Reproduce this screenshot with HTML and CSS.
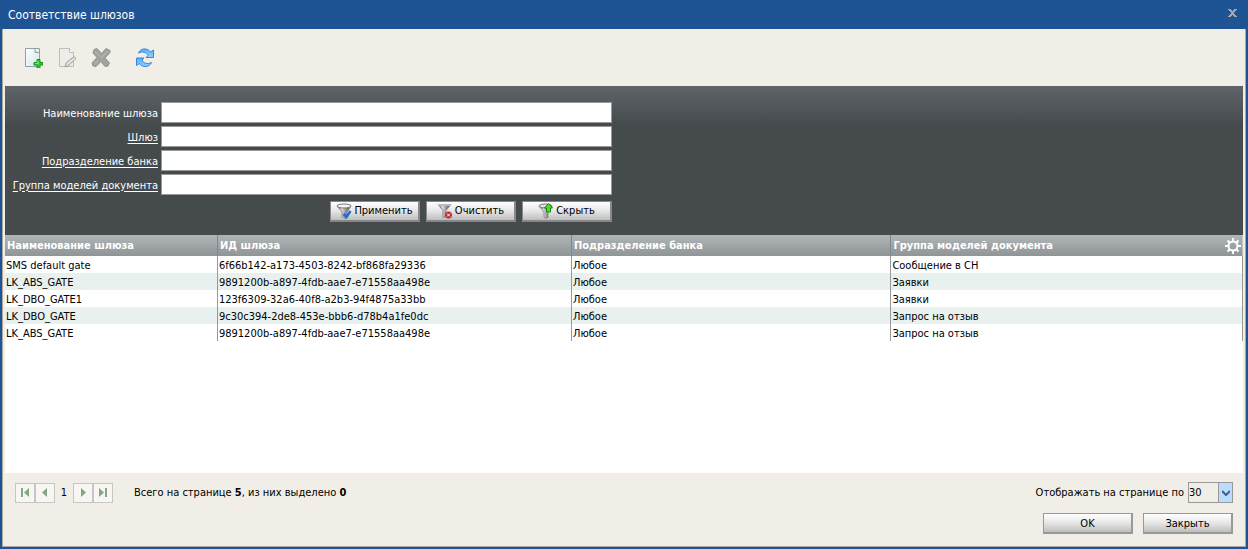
FILE: index.html
```html
<!DOCTYPE html>
<html lang="ru">
<head>
<meta charset="utf-8">
<title>Соответствие шлюзов</title>
<link rel="stylesheet" href="styles.css">
</head>
<body>
<svg class="defs" aria-hidden="true">
  <defs>
    <linearGradient id="paper" x1="0" y1="0" x2="1" y2="1"><stop offset="0" stop-color="#fff"/><stop offset="1" stop-color="#d3e6e6"/></linearGradient>
    <linearGradient id="sky" x1="0" y1="0" x2="0" y2="1"><stop offset="0" stop-color="#5aaef5"/><stop offset="1" stop-color="#90d2ff"/></linearGradient>
    <linearGradient id="steel" x1="0" y1="0" x2="1" y2="0"><stop offset="0" stop-color="#555"/><stop offset=".35" stop-color="#ddd"/><stop offset=".6" stop-color="#999"/><stop offset="1" stop-color="#444"/></linearGradient>
  </defs>
</svg>
<main class="window">
  <header class="titlebar">
    <h1 class="title">Соответствие шлюзов</h1>
    <button class="close" type="button" aria-label="Закрыть окно">
      <svg width="9" height="8" viewBox="0 0 9 8"><path d="M0 0h3v1h1v1h1V1h1V0h3v1H8v1H7v1H6v2h1v1h1v1h1v1H6V7H5V6H4v1H3v1H0V7h1V6h1V5h1V3H2V2H1V1H0z" fill="#a3a6ad"/></svg>
    </button>
  </header>
  <div class="body">
    <div class="toolbar">
      <button class="tool" type="button" aria-label="Создать">
        <svg width="20" height="20" viewBox="0 0 20 20"><path d="M2.500 .5h14v18h-14z" fill="url(#paper)" stroke="#8ba5a6"/><path d="M12 1v3.500h4" fill="#dce8e8" stroke="#8ba5a6"/><path d="M14 11.500h3v3h3v2.500h-3v3h-3v-3h-3v-2.500h3z" fill="#35c435" stroke="#14961e"/><path d="M15 13v2.500h-2.500" stroke="#8bf28b" fill="none"/></svg>
      </button>
      <button class="tool" type="button" aria-label="Изменить">
        <svg width="20" height="20" viewBox="0 0 20 20"><path d="M2.500 .5h10l4 4v14h-14z" fill="#eeede9" stroke="#bdbdb9"/><path d="M12.500 .5v4h4" fill="#fafafa" stroke="#bdbdb9"/><path d="M8 19l1-4 8-6.500 2 2L11 18z" fill="#d4d4d2" stroke="#a4a4a1"/><path d="M10 16.500l7.500-6" stroke="#f4f4f2"/></svg>
      </button>
      <button class="tool" type="button" aria-label="Удалить">
        <svg width="20" height="20" viewBox="0 0 20 20"><path d="M3 1.500l3-1 4.500 5L15 .5l4 2v2L14 10l4.500 5-1.500 3-3 .5-4-5-5 5-3-.5-1-3L6 9.500 2 5z" fill="#a2a29f" stroke="#91918e" stroke-linejoin="round"/><path d="M4 3.500l6.500 6L17 3M3.500 16l4-3.500" stroke="#bdbdba" fill="none"/></svg>
      </button>
      <button class="tool tool-refresh" type="button" aria-label="Обновить">
        <svg width="20" height="20" viewBox="0 0 20 20"><path d="M3.500 5C5.500 0 12.500-.5 15.500 4l3-2v7.500H11l2-2C11.500 4 7.500 3 3.500 5z" fill="url(#sky)" stroke="#3585e2" stroke-linejoin="round"/><path d="M16.500 14.500C14.500 19.500 7.500 20 4.500 15.500l-3 2V10H9l-2 2C8.500 15.500 12.500 16.500 16.500 14.500z" fill="url(#sky)" stroke="#3585e2" stroke-linejoin="round"/></svg>
      </button>
    </div>
    <form class="filter">
      <label class="caption" for="f-name">Наименование шлюза</label><input class="field" id="f-name" type="text">
      <label class="caption" for="f-gate"><a class="lookup" href="#gate">Шлюз</a></label><input class="field" id="f-gate" type="text">
      <label class="caption" for="f-dep"><a class="lookup" href="#department">Подразделение банка</a></label><input class="field" id="f-dep" type="text">
      <label class="caption" for="f-group"><a class="lookup" href="#group">Группа моделей документа</a></label><input class="field" id="f-group" type="text">
      <div class="actions">
        <button class="btn" type="button"><svg width="16" height="16" viewBox="0 0 16 16"><path d="M1 3l5 6v5l3 1.500 2-1V9l4-6z" fill="url(#steel)" stroke="#777" stroke-width=".7"/><ellipse cx="8" cy="3" rx="7" ry="2" fill="#f4f4f4" stroke="#777"/><path d="M7.500 11l3 3 4-6" fill="none" stroke="#1c6fd0" stroke-width="2.500"/></svg>Применить</button>
        <button class="btn" type="button"><svg width="16" height="16" viewBox="0 0 16 16"><path d="M1 1.500h13l-5 6v6l-3 1v-7z" fill="url(#steel)" stroke="#8a8a8a"/><path d="M1 2h13" stroke="#b9b9c4" stroke-width="2"/><circle cx="11.500" cy="12" r="3.500" fill="#bf2c32"/><path d="M10 10.500l3 3m0-3l-3 3" stroke="#fff"/></svg>Очистить</button>
        <button class="btn" type="button"><svg width="16" height="16" viewBox="0 0 16 16"><path d="M1 3l5 6v5l2 1.500 2-1V9l4-6z" fill="url(#steel)" stroke="#777" stroke-width=".7"/><ellipse cx="7.500" cy="3" rx="6.500" ry="2" fill="#e2e2e2" stroke="#777"/><path d="M10.500 .5l4 4.500h-2v4h-4V5h-2z" fill="#4cdb2b" stroke="#15890f"/></svg>Скрыть</button>
      </div>
    </form>
    <section class="grid">
      <table class="table">
        <colgroup><col class="c-name"><col class="c-id"><col class="c-dep"><col class="c-group"></colgroup>
        <thead><tr><th>Наименование шлюза</th><th>ИД шлюза</th><th>Подразделение банка</th><th><div class="last-head"><span>Группа моделей документа</span>
          <button class="gear" type="button" aria-label="Настройка"><svg width="16" height="16" viewBox="0 0 16 16"><circle cx="8" cy="8" r="4.500" fill="none" stroke="#fff" stroke-width="2"/><path d="M8 0v3M8 13v3M0 8h3M13 8h3M2.500 2.500l2 2M11.500 11.500l2 2M13.500 2.500l-2 2M4.500 11.500l-2 2" stroke="#fff" stroke-width="2"/></svg></button></div></th></tr></thead>
        <tbody>
          <tr><td>SMS default gate</td><td>6f66b142-a173-4503-8242-bf868fa29336</td><td>Любое</td><td>Сообщение в СН</td></tr>
          <tr><td>LK_ABS_GATE</td><td>9891200b-a897-4fdb-aae7-e71558aa498e</td><td>Любое</td><td>Заявки</td></tr>
          <tr><td>LK_DBO_GATE1</td><td>123f6309-32a6-40f8-a2b3-94f4875a33bb</td><td>Любое</td><td>Заявки</td></tr>
          <tr><td>LK_DBO_GATE</td><td>9c30c394-2de8-453e-bbb6-d78b4a1fe0dc</td><td>Любое</td><td>Запрос на отзыв</td></tr>
          <tr><td>LK_ABS_GATE</td><td>9891200b-a897-4fdb-aae7-e71558aa498e</td><td>Любое</td><td>Запрос на отзыв</td></tr>
        </tbody>
      </table>
    </section>
    <footer class="footer">
      <div class="status">
        <nav class="pager" aria-label="Страницы">
          <button class="page" type="button" aria-label="Первая"><svg width="10" height="10" viewBox="0 0 10 10"><path d="M1 0h2v9H1zM9 0v9L4 4.500z"/></svg></button>
          <button class="page" type="button" aria-label="Предыдущая"><svg width="10" height="10" viewBox="0 0 10 10"><path d="M7 0v9L2 4.500z"/></svg></button>
          <span class="current">1</span>
          <button class="page" type="button" aria-label="Следующая"><svg width="10" height="10" viewBox="0 0 10 10"><path d="M3 0v9l5-4.500z"/></svg></button>
          <button class="page" type="button" aria-label="Последняя"><svg width="10" height="10" viewBox="0 0 10 10"><path d="M1 0v9l5-4.500zM7 0h2v9H7z"/></svg></button>
        </nav>
        <p class="total">Всего на странице <b>5</b>, из них выделено <b>0</b></p>
        <label class="size-label" for="size">Отображать на странице по</label>
        <span class="size-box"><select class="size" id="size"><option>30</option></select><span class="arrow"><svg width="8" height="6" viewBox="0 0 8 6"><path d="M0 1l4 4 4-4" fill="none" stroke="#42618a" stroke-width="2"/></svg></span></span>
      </div>
      <div class="buttons">
        <button class="btn" type="button">OK</button>
        <button class="btn" type="button">Закрыть</button>
      </div>
    </footer>
  </div>
</main>
</body>
</html>
```
FILE: styles.css
```css
* { box-sizing: border-box; }
body { margin: 0; }
body, button, input, select {
  font: 11px/13px "Tahoma", "DejaVu Sans Condensed", "DejaVu Sans", sans-serif;
  color: #000;
}
button { padding: 0; }
svg { display: block; flex: none; }
.defs { position: absolute; width: 0; height: 0; }

.window {
  display: flex;
  flex-direction: column;
  min-height: 100vh;
  padding: 0 2px 2px;
  background: #1e5494;
}
.titlebar {
  display: flex;
  align-items: center;
  justify-content: space-between;
  height: 29px;
  padding: 0 8px 0 6px;
}
.title { margin: 0; font-size: 12px; line-height: 16px; font-weight: normal; color: #fff; }
.close { display: flex; padding: 1px; margin-bottom: 3px; border: 0; background: none; }

.body {
  display: flex;
  flex: 1;
  flex-direction: column;
  padding: 0 2px;
  border: 1px solid #aaa8a2;
  border-top: 0;
  background: #f1eee7;
}
.toolbar { display: flex; align-items: center; gap: 14px; height: 57px; padding: 1px 0 0 18px; }
.tool { border: 0; background: none; }
.tool-refresh { margin-left: 10px; }

.filter {
  display: grid;
  grid-template-columns: 153px minmax(0, 451px);
  align-items: center;
  gap: 3px;
  padding: 16px 0 13px;
  background: linear-gradient(#5e6468, #454a4d 40px);
}
.caption { padding-top: 1px; color: #fff; text-align: right; white-space: nowrap; }
.lookup { color: #fff; text-underline-offset: 2px; }
.field { width: 100%; height: 21px; padding: 1px 3px; border: 1px solid #999; background: #fff; }
.actions { display: flex; grid-column: 2; justify-content: flex-end; gap: 6px; padding-top: 3px; }
.btn {
  display: flex;
  align-items: center;
  justify-content: center;
  gap: 2px;
  width: 90px;
  height: 21px;
  border: solid #999;
  border-width: 1px 2px 2px 1px;
  background: linear-gradient(#fff, #e6e6e6 50%, #bebebe);
}
.actions .btn { padding-bottom: 1px; border-color: #888; }

.grid { flex: 1; background: #fff; }
.table { width: 100%; table-layout: fixed; border-collapse: separate; border-spacing: 0; }
.c-name { width: 17.2%; }
.c-id { width: 28.6%; }
.c-dep { width: 25.8%; }
.table thead { background: linear-gradient(#b0b5b8, #8f9497); }
.table th {
  height: 21px;
  padding: 0 2px;
  border-right: 1px solid #85888a;
  color: #fff;
  text-align: left;
  white-space: nowrap;
}
.table th:last-child { border-right: 0; }
.last-head { display: flex; align-items: center; justify-content: space-between; }
.gear { border: 0; background: none; }
.table td { height: 17px; padding: 1px 1px 0; border-right: 1px solid #999; white-space: nowrap; }
.table tbody tr:nth-child(even) { background: #e8f1ee; }

.footer { padding: 9px 10px 12px; }
.status { display: flex; align-items: center; height: 21px; }
.pager { display: flex; align-items: center; }
.page {
  display: flex;
  align-items: center;
  justify-content: center;
  width: 20px;
  height: 20px;
  border: 1px solid #c6c6c6;
  background: #f7f6f2;
  fill: #86a582;
}
.current { width: 18px; text-align: center; }
.total { margin: 0 auto 0 21px; }
.size-label { margin-right: 4px; }
.size-box { display: flex; position: relative; width: 45px; height: 21px; }
.size { width: 100%; padding: 0; border: 1px solid #999; border-radius: 0; appearance: none; background: #f1eee7; }
.arrow {
  position: absolute;
  inset: 0 0 0 auto;
  display: flex;
  align-items: center;
  justify-content: center;
  width: 15px;
  border: 1px solid #999;
  background: #bbdcfc;
  pointer-events: none;
}
.buttons { display: flex; justify-content: flex-end; gap: 10px; padding-top: 10px; }
```
